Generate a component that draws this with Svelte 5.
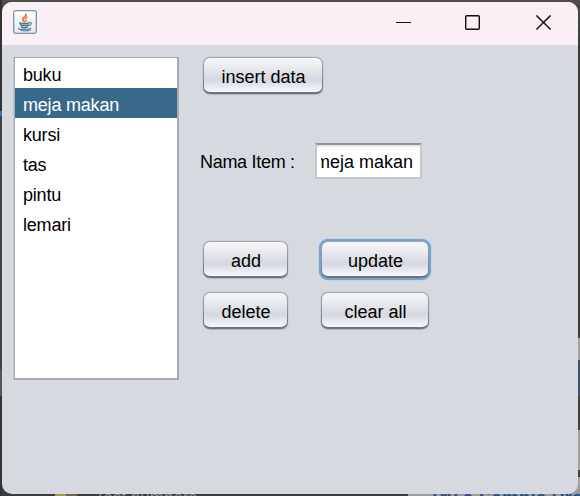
<script>
  const items = ['buku', 'meja makan', 'kursi', 'tas', 'pintu', 'lemari'];
  let selected = $state(1);
  let name = $derived(items[selected]);
</script>

<div class="desktop">
  <div class="edge-left"></div>
  <div class="edge-right"></div>
  <div class="edge-bottom"></div>
  <span class="behind light">Test numbers</span>
  <span class="behind link">Try a Sample Pro</span>
  <span class="folder"></span>

  <main class="window">
    <header>
      <svg class="java" width="24" height="24" viewBox="0 0 24 24">
        <defs>
          <linearGradient id="jbg" x1="0" y1="0" x2="0" y2="1">
            <stop offset="0" stop-color="#fff" /><stop offset="1" stop-color="#e6e8eb" />
          </linearGradient>
        </defs>
        <rect x=".7" y=".7" width="22.6" height="22.6" rx="1.8" fill="url(#jbg)" stroke="#7795a8" stroke-width="1.3" />
        <g fill="none" stroke-linecap="round">
          <path d="M12.8 4.4c1.3 2.500-4.200 3.200-2.900 5.600.3.600.9 1 1.300 1.500" stroke="#ef7c28" stroke-width="1.9" />
          <path d="M14.400 7.200c-2.400 1.100-2.200 2-1.300 2.800.5.600.2 1.100-.4 1.500" stroke="#f08a3e" stroke-width="1.400" />
          <path d="M6.800 12.900c-.8.900 8.400.9 9.300-.1M7.500 14.900c2 1 6.200.9 7.800 0M8.400 16.900c1.500.8 4.700.8 6.200 0" stroke="#477594" stroke-width="1.500" />
          <path d="M16.500 12.500c2.800-.5 2.300 2.600-.6 3.200M5.700 18.300c-1.600 1.200 8.700 1.900 12.100-.1M8 20.500c3.500.5 7.300.3 9.600-.6" stroke="#5c86a2" stroke-width="1.200" />
        </g>
      </svg>
      <svg class="controls" width="156" height="16" viewBox="0 0 156 16" fill="none" stroke="#111">
        <path d="M0 7.500h15" stroke-width="1" />
        <rect x="69.700" y=".7" width="13.600" height="13.600" rx="1" stroke-width="1.400" />
        <path d="M140.400.400l14.200 14.200M154.600.400l-14.200 14.200" stroke-width="1.400" />
      </svg>
    </header>

    <div class="content">
      <ul class="list">
        {#each items as item, i}
          <li><button class="row" class:selected={i === selected} onclick={() => (selected = i)}>{item}</button></li>
        {/each}
      </ul>
      <section class="form">
        <button class="btn insert">insert data</button>
        <label class="field">
          <span class="caption">Nama Item :</span>
          <span class="input"><span class="clip"><span class="value">{name}</span></span></span>
        </label>
        <div class="actions">
          <button class="btn">add</button>
          <button class="btn focused">update</button>
          <button class="btn">delete</button>
          <button class="btn">clear all</button>
        </div>
      </section>
    </div>
  </main>
</div>

<style>
  :global(body) { margin: 0; overflow: hidden; }
  .desktop {
    position: relative;
    box-sizing: border-box;
    width: 580px;
    height: 496px;
    padding: 2px;
    overflow: hidden;
    background: linear-gradient(#504d4d, #3c3c3c 40px, #3c3c3c);
    font-family: "Liberation Sans", Arial, sans-serif;
    font-size: 18px;
    color: #000;
  }
  .edge-left {
    position: absolute; left: 0; top: 0; width: 2px; height: 496px;
    background: linear-gradient(#333 0 111px, #3671b9 111px 116px, #414141 116px 369px, #555 369px 396px, #343434 396px);
  }
  .edge-right {
    position: absolute; left: 568px; top: 338px; width: 12px; height: 158px;
    background: linear-gradient(#a3a3a3 0 22px, #475361 22px 58px, #414141 58px 92px, #a2a2a2 92px 132px, #414141 132px 139px, #a2a2a2 139px);
  }
  .edge-bottom { position: absolute; left: 408px; top: 486px; width: 172px; height: 10px; background: #9c9c9c; }
  .behind { position: absolute; line-height: 18px; white-space: nowrap; }
  .light { left: 95px; top: 489px; color: #8d8d8d; font-size: 17px; }
  .link { left: 429px; top: 489px; color: #294f8b; font-weight: bold; font-size: 19px; }
  .folder { position: absolute; left: 55px; top: 494px; width: 22px; height: 2px; background: linear-gradient(90deg, #a29459 50%, #6d6259 50%); }
  .window {
    position: relative;
    width: 576px;
    height: 492px;
    overflow: hidden;
    border-radius: 10px;
    background: #d6d9e0;
  }
  header {
    display: flex;
    justify-content: space-between;
    box-sizing: border-box;
    height: 43px;
    padding: 8px 26px 0 11px;
    background: #f9eff5;
  }
  .controls { margin-top: 5px; }
  .content { display: flex; padding: 12px 0 0 12px; gap: 21px; }
  .list {
    box-sizing: border-box;
    width: 165px;
    height: 323px;
    margin: 0;
    padding: 0;
    list-style: none;
    background: #fff;
    border: solid #a5aab5;
    border-width: 1px 2px 2px 1px;
    box-shadow: -1px 0 #c2c6ce;
  }
  .row {
    display: block;
    width: 100%;
    height: 30px;
    padding: 4px 0 0 8px;
    border: 0;
    background: none;
    color: #000;
    font: inherit;
    line-height: 27px;
    text-align: left;
    letter-spacing: -.2px;
  }
  .row.selected { background: #39698a; color: #fff; }
  .form { display: flex; flex-direction: column; align-items: flex-start; }
  .btn {
    box-sizing: border-box;
    height: 37px;
    margin: 0;
    padding: 3px 0 0 1px;
    border: 1.5px solid transparent;
    border-width: 1px 1px 2px;
    border-radius: 7px;
    background:
      linear-gradient(#f7f8fa, #e5e7eb 35%, #d6d9e0 60%, #d8dbe4 68%, #f5f8ff) padding-box,
      linear-gradient(#a5a8ad, #909297 50%, #6d7076) border-box;
    box-shadow: 0 0 1px #83868b, 0 1px 1px #b9bdc5;
    color: #000;
    font: inherit;
    line-height: 32px;
  }
  .insert { width: 120px; margin-left: 3px; }
  .field { display: flex; align-items: center; height: 37px; margin-top: 48px; }
  .caption { width: 115px; padding-top: 3px; letter-spacing: -.3px; }
  .input {
    box-sizing: border-box;
    display: flex;
    width: 107px;
    height: 36px;
    padding: 0 7px 0 4px;
    border: solid #c6c8cc;
    border-width: 2px;
    border-top-color: #909297;
    background: linear-gradient(#ddd, #fff 3px);
  }
  .clip { display: flex; justify-content: flex-end; width: 92px; overflow: hidden; line-height: 35px; }
  .value { white-space: nowrap; }
  .actions {
    display: grid;
    grid-template-columns: 85px 108px;
    gap: 14px 33px;
    margin: 62px 0 0 3px;
  }
  .focused { box-shadow: 0 0 0 2px #73a4d1, 0 0 1px 2px #73a4d1; }
</style>
